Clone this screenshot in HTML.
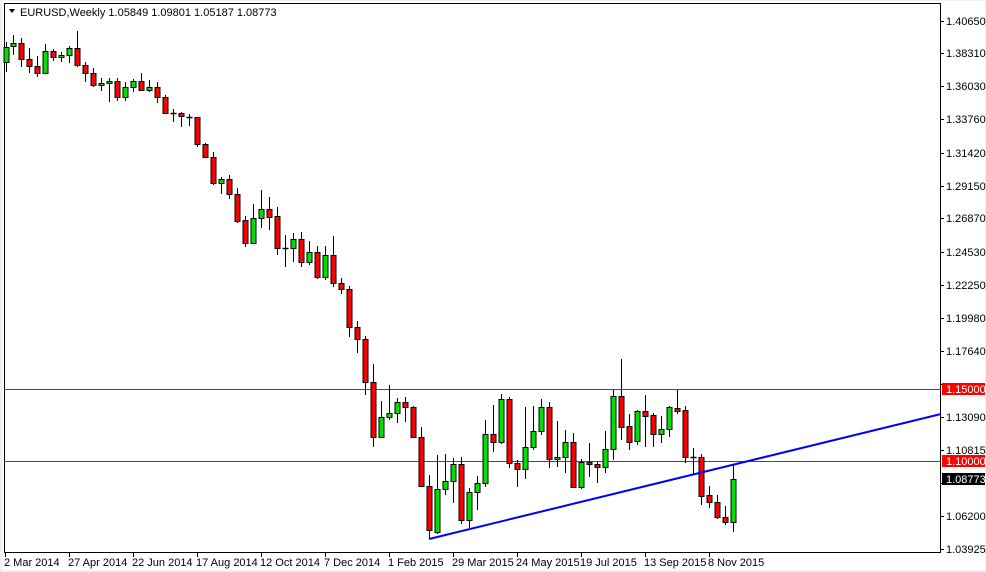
<!DOCTYPE html>
<html><head><meta charset="utf-8"><style>
html,body{margin:0;padding:0;background:#f0f0f0;}
svg{display:block;}
text{font-family:"Liberation Sans",Arial,sans-serif;font-size:11px;fill:#000;}
</style></head><body>
<svg id="s" width="986" height="572" viewBox="0 0 986 572" xmlns="http://www.w3.org/2000/svg">
<rect x="0" y="0" width="986" height="572" fill="#f0f0f0"/>
<rect x="2" y="1" width="983" height="569" fill="#fff"/>
<rect x="4.5" y="3.5" width="936" height="549" fill="#fff" stroke="#000" stroke-width="1"/>
<line x1="4" y1="389.5" x2="941" y2="389.5" stroke="#ff0000" stroke-width="1"/>
<line x1="4" y1="461.5" x2="941" y2="461.5" stroke="#ff0000" stroke-width="1"/>
<g id="c"></g>
<line x1="429" y1="539" x2="941" y2="414" stroke="#0000ff" stroke-width="2"/>
<path d="M9 9 L15 9 L12 13 Z" fill="#000"/>
<text x="20" y="16">EURUSD,Weekly  1.05849 1.09801 1.05187 1.08773</text>
<g id="py"></g>
<rect x="942" y="383" width="43" height="12" fill="#ff0000"/>
<text x="946" y="393" style="fill:#fff">1.15000</text>
<rect x="942" y="455" width="43" height="12" fill="#ff0000"/>
<text x="946" y="465" style="fill:#fff">1.10000</text>
<rect x="942" y="473" width="43" height="12" fill="#000"/>
<text x="946" y="483" style="fill:#fff">1.08773</text>
<g id="tx"></g>
<text x="4" y="566">2 Mar 2014</text>
<text x="68" y="566">27 Apr 2014</text>
<text x="132" y="566">22 Jun 2014</text>
<text x="196" y="566">17 Aug 2014</text>
<text x="260" y="566">12 Oct 2014</text>
<text x="324" y="566">7 Dec 2014</text>
<text x="388" y="566">1 Feb 2015</text>
<text x="452" y="566">29 Mar 2015</text>
<text x="516" y="566">24 May 2015</text>
<text x="580" y="566">19 Jul 2015</text>
<text x="644" y="566">13 Sep 2015</text>
<text x="708" y="566">8 Nov 2015</text>
<text x="946" y="25">1.40650</text>
<text x="946" y="57">1.38310</text>
<text x="946" y="90">1.36030</text>
<text x="946" y="123">1.33760</text>
<text x="946" y="157">1.31420</text>
<text x="946" y="190">1.29150</text>
<text x="946" y="222">1.26870</text>
<text x="946" y="256">1.24530</text>
<text x="946" y="289">1.22250</text>
<text x="946" y="322">1.19980</text>
<text x="946" y="355">1.17640</text>
<text x="946" y="421">1.13090</text>
<text x="946" y="454">1.10815</text>
<text x="946" y="520">1.06200</text>
<text x="946" y="553">1.03925</text>
</svg>
<script>
var d=[[6,42,72,47,62,'g'],[13,35,55,43,46,'g'],[21,38,67,43,59,'r'],[29,48,73,59,66,'r'],[37,56,77,66,73,'r'],[45,44,74,51,73,'g'],[53,49,61,51,57,'r'],[61,52,62,55,57,'g'],[69,46,63,48,55,'g'],[77,31,67,48,65,'r'],[85,62,82,65,73,'r'],[93,68,87,73,85,'r'],[101,78,91,83,85,'g'],[109,78,102,81,83,'g'],[117,78,101,81,97,'r'],[125,82,101,87,97,'g'],[133,79,92,81,87,'g'],[141,73,91,81,90,'r'],[149,80,92,87,90,'g'],[157,82,103,87,97,'r'],[165,95,113,97,113,'r'],[173,109,122,113,113,'d'],[181,112,127,113,116,'r'],[189,114,126,117,117,'d'],[197,117,147,117,144,'r'],[205,143,158,144,157,'r'],[213,152,185,157,183,'r'],[221,177,194,179,183,'g'],[229,175,199,179,194,'r'],[237,188,223,194,221,'r'],[245,216,247,220,243,'r'],[253,204,244,218,243,'g'],[261,190,228,209,218,'g'],[269,197,230,209,217,'r'],[277,207,255,216,248,'r'],[285,235,267,248,248,'d'],[293,233,262,239,248,'g'],[301,232,267,239,262,'r'],[309,241,265,252,262,'g'],[317,246,279,252,277,'r'],[325,246,280,255,277,'g'],[333,236,287,255,283,'r'],[341,278,294,283,289,'r'],[349,286,337,289,327,'r'],[357,321,353,327,339,'r'],[365,336,395,339,382,'r'],[373,364,447,382,437,'r'],[381,401,437,417,437,'g'],[389,385,420,413,417,'g'],[397,398,423,402,413,'g'],[405,397,422,402,407,'r'],[413,406,438,407,437,'r'],[421,427,487,437,486,'r'],[429,475,538,486,530,'r'],[437,455,534,489,532,'g'],[445,454,495,481,489,'g'],[453,458,503,464,481,'g'],[461,457,524,464,520,'r'],[469,488,528,492,520,'g'],[477,476,510,483,492,'g'],[485,420,487,434,483,'g'],[493,405,452,434,442,'r'],[501,394,444,399,442,'g'],[509,397,468,399,463,'r'],[517,460,487,463,469,'r'],[525,407,479,447,469,'g'],[533,406,450,431,447,'g'],[541,399,435,407,431,'g'],[549,402,468,407,459,'r'],[557,421,467,457,459,'g'],[565,430,473,442,457,'g'],[573,433,488,442,487,'r'],[581,459,489,462,487,'g'],[589,443,477,462,464,'r'],[597,462,483,464,467,'r'],[605,431,473,449,467,'g'],[613,390,460,396,449,'g'],[621,359,440,396,427,'r'],[629,414,450,426,442,'r'],[637,410,445,411,441,'g'],[645,395,447,411,416,'r'],[653,413,447,415,434,'r'],[661,416,443,429,434,'g'],[669,406,437,407,429,'g'],[677,390,414,408,411,'r'],[685,406,463,410,457,'r'],[693,448,475,457,457,'d'],[701,454,505,457,496,'r'],[709,486,508,495,502,'r'],[717,495,519,502,517,'r'],[725,506,525,517,522,'r'],[733,464,532,479,522,'g']];
var g=document.getElementById('c'),h='';
d.forEach(function(c){var x=c[0]+0.5;
h+='<line x1="'+x+'" y1="'+c[1]+'" x2="'+x+'" y2="'+c[2]+'" stroke="#000" stroke-width="1"/>';
if(c[5]=='d'){h+='<line x1="'+(x-3)+'" y1="'+(c[3]+0.5)+'" x2="'+(x+3)+'" y2="'+(c[3]+0.5)+'" stroke="#000" stroke-width="1.5"/>';}
else{h+='<rect x="'+(c[0]-2)+'" y="'+(c[3]+0.5)+'" width="5" height="'+Math.max(2,c[4]-c[3])+'" fill="'+(c[5]=='g'?'#00e000':'#ff0000')+'" stroke="#000" stroke-width="1"/>';}
});
g.innerHTML=h;
var t='';for(var i=0;i<12;i++){var x=5.5+64*i;t+='<line x1="'+x+'" y1="553" x2="'+x+'" y2="557" stroke="#000"/>';}
document.getElementById('tx').innerHTML=t;
var p='';[21,53,86,119,153,186,218,252,285,318,351,384,417,450,483,516,549].forEach(function(y){p+='<line x1="941" y1="'+(y+0.5)+'" x2="944" y2="'+(y+0.5)+'" stroke="#000"/>';});
document.getElementById('py').innerHTML=p;
</script>
</body></html>
